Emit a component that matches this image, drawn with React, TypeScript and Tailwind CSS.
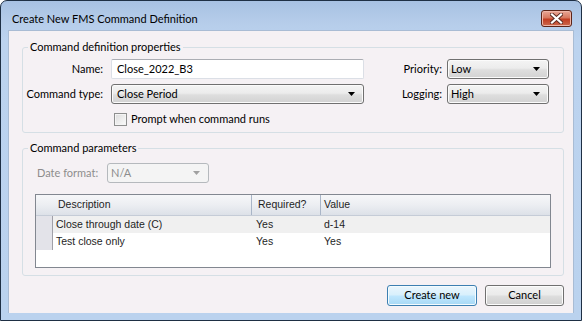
import React from "react"

const ui = { fontFamily: "Lato, 'Open Sans', sans-serif" }
const grid = { fontFamily: "'Liberation Sans', Arial, sans-serif" }

function Arrow({ disabled }: { disabled?: boolean }) {
  return (
    <svg width="7" height="4" viewBox="0 0 7 4" className="shrink-0">
      <path d="M0 0h7L3.5 4z" fill={disabled ? "#a0a0a0" : "#000"} />
    </svg>
  )
}

function Combo({ value, width, pad, disabled }: { value: string; width: string; pad: string; disabled?: boolean }) {
  return (
    <div
      className={`h-[20px] ${width} flex items-center justify-between pr-[8px] rounded-[3px] border ${
        disabled
          ? "border-[#b5b9bd] bg-[#f4f4f4] text-[#8d8d8d]"
          : "border-[#707070] bg-[linear-gradient(#f4f4f4_0%,#ececec_45%,#dedede_55%,#d2d2d2_100%)] text-black shadow-[inset_0_0_0_1px_#fbfbfb]"
      }`}
    >
      <span className={pad}>{value}</span>
      <Arrow disabled={disabled} />
    </div>
  )
}

function Button({ label, primary, width }: { label: string; primary?: boolean; width: string }) {
  return (
    <button
      className={`h-[21px] ${width} rounded-[3px] border text-[11px] text-black ${
        primary
          ? "border-[#3c7fb1] bg-[linear-gradient(#eaf6fd_0%,#d9f0fc_45%,#bee6fd_55%,#a7d9f5_100%)] shadow-[inset_0_0_0_1px_#f3fbfe]"
          : "border-[#707070] bg-[linear-gradient(#f2f2f2_0%,#ebebeb_45%,#dddddd_55%,#cfcfcf_100%)] shadow-[inset_0_0_0_1px_#fcfcfc]"
      }`}
      style={ui}
    >
      {label}
    </button>
  )
}

function Group({ title, children, className }: { title: string; children: React.ReactNode; className?: string }) {
  return (
    <fieldset className={`ml-[13px] mr-[9px] rounded-[3px] border border-[#d5dfe5] ${className ?? ""}`}>
      <legend className="ml-[5px] px-[2px] h-[16px] leading-[16px] text-[11px] text-black">{title}</legend>
      {children}
    </fieldset>
  )
}

const rows = [
  { desc: "Close through date (C)", req: "Yes", value: "d-14", bg: "bg-[#f0f0f0]" },
  { desc: "Test close only", req: "Yes", value: "Yes", bg: "bg-white" },
]

export default function App() {
  return (
    <div className="w-[582px] h-[321px] bg-white" style={ui}>
      <div className="w-full h-full flex flex-col rounded-t-[7px] border border-[#1e2f44] bg-[linear-gradient(#a7c1e2_0px,#b6cdea_22px,#bcd3ef_40px,#bad2ee_100%)] px-[7px]">
        {/* Title bar */}
        <div className="h-[29px] flex items-start justify-between">
          <div className="pt-[10px] pl-[4px] text-[11px] leading-[15px] text-black whitespace-nowrap">
            Create New FMS Command Definition
          </div>
          <div className="mt-[9px] mr-[2px] w-[31px] h-[17px] rounded-[3px] border border-[#5c2418] bg-[linear-gradient(#e9a797_0%,#d7785f_45%,#c23d22_55%,#cc6a4e_100%)] flex items-center justify-center shadow-[inset_0_0_0_1px_#eeb6a8]">
            <svg width="13" height="11" viewBox="0 0 13 11">
              <path d="M2 1.5l9 8M11 1.5l-9 8" stroke="#5a2a22" strokeWidth="4" strokeLinecap="square" />
              <path d="M2 1.5l9 8M11 1.5l-9 8" stroke="#fff" strokeWidth="2.2" strokeLinecap="square" />
            </svg>
          </div>
        </div>

        {/* Client area */}
        <div className="h-[283px] bg-[#f5f1f4] border border-[#a9bcd4] border-b-0 flex flex-col pt-[8px] text-[11px] text-black whitespace-nowrap">
          <Group title="Command definition properties">
            <div className="pt-[4px] pb-[5px] flex flex-col">
              <div className="flex items-center h-[20px]">
                <span className="w-[80px] text-right">Name:</span>
                <div className="ml-[8px] w-[253px] h-[20px] flex items-center pl-[5px] bg-white border border-[#dbdfe6] border-t-[#abadb3] rounded-[2px]">
                  Close_2022_B3
                </div>
                <span className="flex-1 text-right">Priority:</span>
                <div className="ml-[5px] mr-[14px]">
                  <Combo value="Low" width="w-[102px]" pad="pl-[3px]" />
                </div>
              </div>
              <div className="flex items-center h-[20px] mt-[5px]">
                <span className="w-[80px] text-right">Command type:</span>
                <div className="ml-[8px]">
                  <Combo value="Close Period" width="w-[253px]" pad="pl-[5px]" />
                </div>
                <span className="flex-1 text-right">Logging:</span>
                <div className="ml-[5px] mr-[14px]">
                  <Combo value="High" width="w-[102px]" pad="pl-[3px]" />
                </div>
              </div>
              <div className="flex items-center h-[15px] mt-[8px] pl-[91px]">
                <div className="w-[13px] h-[13px] border border-[#8e8f8f] bg-[linear-gradient(135deg,#dcdcdc,#fbfbfb)] shadow-[inset_0_0_0_1px_#f4f4f4]" />
                <span className="ml-[4px]">Prompt when command runs</span>
              </div>
            </div>
          </Group>

          <Group title="Command parameters" className="mt-[7px]">
            <div className="pt-[7px] pb-[7px] flex flex-col">
              <div className="flex items-center h-[20px] pl-[14px]">
                <span className="w-[70px] text-[#8d8d8d]">Date format:</span>
                <Combo value="N/A" width="w-[102px]" pad="pl-[3px]" disabled />
              </div>

              <div className="mt-[11px] mx-[12px] h-[74px] border border-[#828790] bg-white flex flex-col text-[10.5px] text-[#1e1e1e]" style={grid}>
                <div className="h-[21px] flex items-stretch bg-[linear-gradient(#f6f7f9_0%,#eceef2_50%,#dde1e8_100%)] border-b border-[#c5ccd7]">
                  <div className="w-[17px]" />
                  <div className="w-[199px] flex items-center pl-[5px] border-r border-[#a9b5c7]">Description</div>
                  <div className="w-[69px] flex items-center pl-[6px] border-r border-[#a9b5c7]">Required?</div>
                  <div className="flex-1 flex items-center pl-[3px]">Value</div>
                </div>
                {rows.map((r) => (
                  <div key={r.desc} className={`h-[17px] flex items-stretch ${r.bg}`}>
                    <div className="w-[17px] bg-[#e3e3e9] border-r border-[#a0a0a8]" />
                    <div className="w-[199px] flex items-center pl-[3px]">{r.desc}</div>
                    <div className="w-[69px] flex items-center pl-[4px]">{r.req}</div>
                    <div className="flex-1 flex items-center pl-[3px]">{r.value}</div>
                  </div>
                ))}
              </div>
            </div>
          </Group>

          <div className="mt-[9px] mr-[9px] flex justify-end gap-[8px]">
            <Button label="Create new" primary width="w-[90px]" />
            <Button label="Cancel" width="w-[79px]" />
          </div>
        </div>
        <div className="h-[7px]" />
      </div>
    </div>
  )
}
